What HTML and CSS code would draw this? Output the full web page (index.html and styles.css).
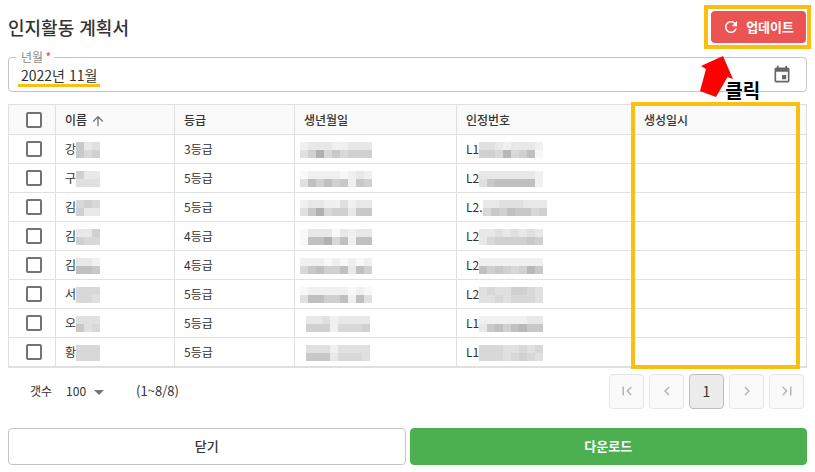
FILE: index.html
```
<!DOCTYPE html>
<html lang="ko">
<head>
    <meta charset="UTF-8">
    <meta name="viewport" content="width=device-width, initial-scale=1.0">
    <title>인지활동 계획서</title>
    <link rel="stylesheet" href="styles.css">
</head>
<body>
    <div class="page">
        <header class="page-header">
            <h1>인지활동 계획서</h1>
            <div class="update-wrap">
                <button type="button" class="btn-update">
                    <svg width="18" height="18" viewBox="0 0 24 24" fill="currentColor"><path d="M17.65 6.35C16.2 4.9 14.21 4 12 4c-4.42 0-7.99 3.58-7.99 8s3.57 8 7.99 8c3.73 0 6.84-2.55 7.73-6h-2.08c-.82 2.33-3.04 4-5.65 4-3.31 0-6-2.69-6-6s2.69-6 6-6c1.66 0 3.14.69 4.22 1.78L13 11h7V4l-2.35 2.35z"/></svg>
                    업데이트
                </button>
                <div class="callout">
                    <svg width="34" height="42" viewBox="0 0 34 42"><path d="M23 0L33 23L27.5 21L16 41L0 35L6 13L1 10Z" fill="#fe0000"/></svg>
                    <span>클릭</span>
                </div>
            </div>
        </header>

        <fieldset class="month-field">
            <legend><label for="month">년월 <em>*</em></label></legend>
            <input type="text" id="month" value="2022년 11월">
            <button type="button" class="btn-calendar" aria-label="달력">
                <svg width="20" height="20" viewBox="0 0 24 24" fill="currentColor"><path d="M17 12h-5v5h5v-5zM16 1v2H8V1H6v2H5c-1.11 0-1.99.9-1.99 2L3 19c0 1.1.89 2 2 2h14c1.1 0 2-.9 2-2V5c0-1.1-.9-2-2-2h-1V1h-2zm3 18H5V8h14v11z"/></svg>
            </button>
        </fieldset>

        <div class="table-wrap">
            <table>
                <colgroup>
                    <col class="col-check">
                    <col class="col-name">
                    <col class="col-grade">
                    <col class="col-birth">
                    <col class="col-number">
                    <col>
                </colgroup>
                <thead>
                    <tr>
                        <th><input type="checkbox" aria-label="전체 선택"></th>
                        <th>이름 <svg class="sort-icon" width="16" height="16" viewBox="0 0 24 24" fill="currentColor"><path d="M4 12l1.41 1.41L11 7.83V20h2V7.83l5.58 5.59L20 12l-8-8-8 8z"/></svg></th>
                        <th>등급</th>
                        <th>생년월일</th>
                        <th>인정번호</th>
                        <th>생성일시</th>
                    </tr>
                </thead>
                <tbody id="rows"></tbody>
            </table>
        </div>

        <div class="table-footer">
            <label for="page-size">갯수</label>
            <div class="select-wrap">
                <select id="page-size">
                    <option>100</option>
                </select>
            </div>
            <span class="range">(1~8/8)</span>
            <nav class="pager">
                <button type="button" disabled aria-label="처음"><svg width="18" height="18" viewBox="0 0 24 24" fill="currentColor"><path d="M18.41 16.59L13.82 12l4.59-4.59L17 6l-6 6 6 6zM6 6h2v12H6z"/></svg></button>
                <button type="button" disabled aria-label="이전"><svg width="18" height="18" viewBox="0 0 24 24" fill="currentColor"><path d="M15.41 7.41L14 6l-6 6 6 6 1.41-1.41L10.83 12z"/></svg></button>
                <button type="button" class="current">1</button>
                <button type="button" disabled aria-label="다음"><svg width="18" height="18" viewBox="0 0 24 24" fill="currentColor"><path d="M10 6L8.59 7.41 13.17 12l-4.58 4.59L10 18l6-6z"/></svg></button>
                <button type="button" disabled aria-label="마지막"><svg width="18" height="18" viewBox="0 0 24 24" fill="currentColor"><path d="M5.59 7.41L10.18 12l-4.59 4.59L7 18l6-6-6-6zM16 6h2v12h-2z"/></svg></button>
            </nav>
        </div>

        <div class="actions">
            <button type="button" class="btn-close">닫기</button>
            <button type="button" class="btn-download">다운로드</button>
        </div>
    </div>

    <script src="script.js"></script>
</body>
</html>
```
FILE: styles.css
```
:root {
    --highlight: #fbbf12;
    --line: #e0e0e0;
    --text: #333333;
}

* {
    margin: 0;
    padding: 0;
    box-sizing: border-box;
}

body {
    background-color: #ffffff;
    color: var(--text);
    font-family: "Noto Sans CJK KR", sans-serif;
    font-size: 12px;
    line-height: 18px;
}

button,
input,
select {
    font: inherit;
    color: inherit;
}

button {
    cursor: pointer;
}

svg {
    display: block;
}

.page {
    padding: 5px 8px 7px;
}

.page-header {
    display: flex;
    justify-content: space-between;
    align-items: center;
    margin-right: -4px;
}

h1 {
    font-size: 18px;
    font-weight: 500;
    line-height: 24px;
}

.update-wrap {
    position: relative;
    border: 4px solid var(--highlight);
    padding: 2px 1px 2px 3px;
}

.btn-update {
    display: flex;
    align-items: center;
    gap: 6px;
    height: 32px;
    padding: 0 12px 0 11px;
    border: none;
    border-radius: 4px;
    background-color: #ec5453;
    color: #ffffff;
    font-size: 13px;
    font-weight: 700;
}

/* arrow pointing at the update button */
.callout {
    position: absolute;
    top: 47px;
    left: -8px;
    z-index: 1;
    display: flex;
    align-items: flex-end;
    pointer-events: none;
}

.callout span {
    margin: 0 0 -5px -9px;
    color: #000000;
    font-size: 19px;
    font-weight: 700;
    line-height: 26px;
    white-space: nowrap;
}

.month-field {
    position: relative;
    display: flex;
    align-items: center;
    margin-top: 2px;
    padding: 0 14px 0 12px;
    border: 1px solid #c4c4c4;
    border-radius: 4px;
}

.month-field legend {
    margin-left: -5px;
    padding: 0 3px 0 5px;
    color: #8a8a8a;
    line-height: 12px;
}

.month-field em {
    margin-left: -1px;
    color: #e53935;
    font-style: normal;
}

.month-field input {
    flex: 1;
    height: 28px;
    padding-bottom: 4px;
    border: none;
    outline: none;
    background: transparent;
    font-size: 14px;
}

.month-field::after {
    content: "";
    position: absolute;
    left: 9px;
    bottom: 4px;
    width: 82px;
    height: 3px;
    background-color: var(--highlight);
}

.btn-calendar {
    padding-bottom: 4px;
    border: none;
    background: transparent;
    color: #666666;
}

.table-wrap {
    position: relative;
    margin-top: 12px;
}

/* frame around the created-at column */
.table-wrap::after {
    content: "";
    position: absolute;
    top: -2px;
    right: 7px;
    bottom: -1px;
    left: 623px;
    border: 4px solid var(--highlight);
    pointer-events: none;
}

table {
    width: 100%;
    table-layout: fixed;
    border-collapse: separate;
    border-spacing: 0;
    border: 1px solid var(--line);
    border-bottom-width: 2px;
}

.col-check { width: 47px; }
.col-name { width: 119px; }
.col-grade { width: 120px; }
.col-birth { width: 162px; }
.col-number { width: 178px; }

th,
td {
    height: 29px;
    padding: 0 9px;
    border-right: 1px solid var(--line);
    border-bottom: 1px solid var(--line);
    text-align: left;
    font-weight: 400;
    white-space: nowrap;
}

th {
    height: 30px;
    background-color: #fafafa;
    font-weight: 500;
}

th:first-child,
td:first-child {
    padding-left: 17px;
}

th:last-child,
td:last-child {
    border-right: none;
}

tbody tr:last-child td {
    height: 28px;
    border-bottom: none;
}

input[type="checkbox"] {
    display: block;
    width: 16px;
    height: 16px;
    appearance: none;
    border: 2px solid #737373;
    border-radius: 2px;
    background-color: #ffffff;
}

input[type="checkbox"]:checked {
    background-color: #737373;
}

.sort-icon {
    display: inline-block;
    vertical-align: -4px;
    color: #757575;
}

.mosaic {
    display: inline-block;
    vertical-align: middle;
}

.mosaic-birth {
    margin-left: -4px;
}

/* birth dates with fewer blocks start further right */
.mosaic-birth-short {
    margin-left: 2px;
}

.table-footer {
    display: flex;
    align-items: center;
    margin-top: 6px;
    padding: 0 3px 0 22px;
}

.table-footer label,
.table-footer select,
.range {
    padding-bottom: 2px;
}

.select-wrap {
    position: relative;
    margin-left: 14px;
}

.select-wrap select {
    width: 40px;
    appearance: none;
    border: none;
    background: transparent;
    outline: none;
}

.select-wrap::after {
    content: "";
    position: absolute;
    top: 8px;
    right: 2px;
    border: 5px solid transparent;
    border-top: 5px solid #757575;
    border-bottom: none;
    pointer-events: none;
}

.range {
    margin-left: 30px;
    font-size: 13px;
}

.pager {
    display: flex;
    gap: 5px;
    margin-left: auto;
}

.pager button {
    display: flex;
    align-items: center;
    justify-content: center;
    width: 35px;
    height: 35px;
    padding-bottom: 2px;
    border: 1px solid #e6e6e6;
    border-radius: 4px;
    background-color: #fafafa;
    color: #b5b5b5;
    font-size: 14px;
}

.pager .current {
    border-color: #bdbdbd;
    background-color: #ececec;
    color: var(--text);
}

.actions {
    display: flex;
    gap: 4px;
    margin-top: 19px;
}

.actions button {
    flex: 1;
    height: 37px;
    padding-bottom: 2px;
    border: 1px solid #c4c4c4;
    border-radius: 4px;
    background-color: #ffffff;
    font-size: 13px;
    font-weight: 500;
}

.actions .btn-download {
    border-color: #4caf50;
    background-color: #4caf50;
    color: #ffffff;
    font-weight: 700;
}
```
FILE: script.js
```
// Personal data is drawn as a mosaic: two lines of blocks,
// 0 is the darkest grey, 9 the lightest.
const rows = [
    { name: '강', nameMask: ['376', '354'], grade: '3등급', birth: ['877788777', '640535444'], number: 'L1', numberMask: ['66787778', '44515429'] },
    { name: '구', nameMask: ['477', '666'], grade: '5등급', birth: ['988889878', '624243834'], number: 'L2', numberMask: ['77777778', '63222228'] },
    { name: '김', nameMask: ['545', '477'], grade: '5등급', birth: ['877886877', '630544733'], number: 'L2.', numberMask: ['77666777', '53423354'] },
    { name: '김', nameMask: ['774', '455'], grade: '4등급', birth: ['977797877', '922052822'], number: 'L2', numberMask: ['77676767', '75444434'] },
    { name: '김', nameMask: ['778', '223'], grade: '4등급', birth: ['888989898', '532442724'], number: 'L2', numberMask: ['88888888', '24345413'] },
    { name: '서', nameMask: ['555', '556'], grade: '5등급', birth: ['988888989', '622442826'], number: 'L2', numberMask: ['65664456', '66565556'] },
    { name: '오', nameMask: ['666', '365'], grade: '5등급', birth: ['77687777', '44485554'], number: 'L1', numberMask: ['88888877', '73242133'] },
    { name: '황', nameMask: ['555', '555'], grade: '5등급', birth: ['66686666', '33375556'], number: 'L1', numberMask: ['55566565', '55565456'] }
];

const BLOCK = 8;

function mosaic(lines, className) {
    const width = lines[0].length * BLOCK;
    let blocks = '';
    lines.forEach((line, y) => {
        [...line].forEach((level, x) => {
            const grey = 176 + Number(level) * 8;
            blocks += `<rect x="${x * BLOCK}" y="${y * BLOCK}" width="${BLOCK}" height="${BLOCK}" fill="rgb(${grey},${grey},${grey})"/>`;
        });
    });
    return `<svg class="mosaic ${className}" width="${width}" height="16" viewBox="0 0 ${width} 16">${blocks}</svg>`;
}

document.getElementById('rows').innerHTML = rows.map(row => `
    <tr>
        <td><input type="checkbox" aria-label="${row.name} 선택"></td>
        <td>${row.name}${mosaic(row.nameMask, 'mosaic-name')}</td>
        <td>${row.grade}</td>
        <td>${mosaic(row.birth, row.birth[0].length < 9 ? 'mosaic-birth-short' : 'mosaic-birth')}</td>
        <td>${row.number}${mosaic(row.numberMask, 'mosaic-number')}</td>
        <td></td>
    </tr>`).join('');
```
